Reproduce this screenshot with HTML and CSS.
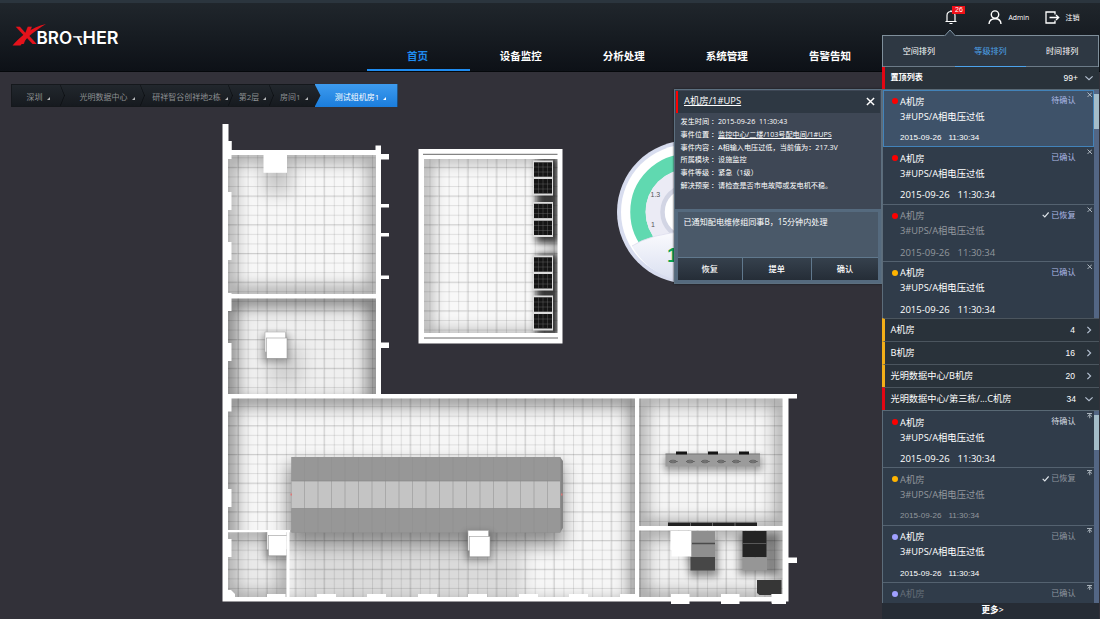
FILE: index.html
```html
<!DOCTYPE html>
<html>
<head>
<meta charset="utf-8">
<title>XBROTHER</title>
<link rel="stylesheet" href="styles.css">
</head>
<body>
<svg class="defs" width="0" height="0">
  <symbol id="x" viewBox="0 0 10 10"><path d="M1 1L9 9M9 1L1 9"/></symbol>
  <symbol id="pin" viewBox="0 0 10 10"><path d="M0 1H10M5 10V3M1 6.500L5 2.800L9 6.500"/></symbol>
  <symbol id="right" viewBox="0 0 10 10"><path d="M3 1L7 5L3 9"/></symbol>
  <symbol id="down" viewBox="0 0 10 10"><path d="M0.500 3L5 7L9.500 3"/></symbol>
  <symbol id="check" viewBox="0 0 10 10"><path d="M1 5.500L4 8.500L9.500 2"/></symbol>
</svg>
<header class="header">
  <svg class="logo" width="112" height="28" viewBox="10 21 112 28">
    <text class="logo-x" x="0" y="0" transform="translate(19 43.500) skewX(14) scale(1.050 1)">X</text>
    <path d="M12.500 45.500C20 37 31 27 46 24C36 30 27 37 20.500 45.500Z" fill="#e5121b"/>
    <text class="logo-t" x="36.500" y="43.500" textLength="35.500" lengthAdjust="spacingAndGlyphs">BRO</text>
    <text class="logo-t small" transform="translate(76.500 45) skewX(26) scale(1.250 1)" x="0" y="0">T</text>
    <text class="logo-t" x="82.500" y="43.500" textLength="36" lengthAdjust="spacingAndGlyphs">HER</text>
  </svg>
  <nav class="nav">
    <a class="nav-item on">首页</a><a class="nav-item">设备监控</a><a class="nav-item">分析处理</a><a class="nav-item">系统管理</a><a class="nav-item">告警告知</a>
  </nav>
  <div class="user">
    <div class="bell">
      <svg width="12" height="15" viewBox="0 0 12 15"><path d="M.5 11.500H11.500M2 11.500V5.500Q2 1.500 6 1.500T10 5.500V11.500M6 1.500V.3M4.500 13.500H7.500" fill="none" stroke="#fff" stroke-width="1.200"/></svg>
      <span class="badge">26</span>
    </div>
    <svg width="14" height="15" viewBox="0 0 14 15"><circle cx="7" cy="4.600" r="3.700" fill="none" stroke="#fff" stroke-width="1.400"/><path d="M1 14Q1.300 9 7 8.800T13 14" fill="none" stroke="#fff" stroke-width="1.400"/></svg>
    <span class="admin">Admin</span>
    <svg class="exit" width="15" height="13" viewBox="0 0 15 13"><path d="M10 3.500V1H1V12H10V9.500M4.500 6.500H13.500M11 4L13.700 6.500L11 9" fill="none" stroke="#fff" stroke-width="1.300"/></svg>
    <span class="logout">注销</span>
  </div>
</header>

<main class="stage">
  <svg class="plan" width="1100" height="547" viewBox="0 72 1100 547">
    <defs>
      <pattern id="tile" x="228.500" y="157.300" width="9.570" height="9.570" patternUnits="userSpaceOnUse"><path d="M0 .5H9.570M.5 0V9.570" stroke="#000" stroke-opacity=".11" stroke-width=".9"/></pattern>
      <pattern id="tile2" x="237" y="166.800" width="28.710" height="28.710" patternUnits="userSpaceOnUse"><path d="M0 .8H28.710M.8 0V28.710" stroke="#000" stroke-opacity=".07" stroke-width="1.500"/></pattern>
      <filter id="soft" x="-50%" y="-50%" width="200%" height="200%"><feGaussianBlur stdDeviation="8.500"/></filter>
      <filter id="soft4" x="-50%" y="-50%" width="200%" height="200%"><feGaussianBlur stdDeviation="3.500"/></filter>
      <clipPath id="c1"><rect x="228" y="155" width="148" height="139"/></clipPath>
      <clipPath id="c2"><rect x="228" y="298.500" width="148" height="95.500"/></clipPath>
      <clipPath id="c3"><rect x="228" y="398.500" width="407" height="198.500"/></clipPath>
      <clipPath id="c4"><rect x="639" y="398.500" width="143.500" height="127.500"/></clipPath>
      <clipPath id="c5"><rect x="639" y="530.500" width="143.500" height="66.500"/></clipPath>
      <clipPath id="c6"><rect x="228" y="532" width="58.500" height="65"/></clipPath>
      <clipPath id="c7"><rect x="424" y="159" width="133.500" height="174"/></clipPath>
      <linearGradient id="dial" x1="0" y1="0" x2="0" y2="1"><stop offset="0" stop-color="#fbfbfe"/><stop offset="1" stop-color="#d9dff0"/></linearGradient>
      <g id="box"><rect x="-3" y="2" width="27" height="28" fill="#000" opacity=".3" filter="url(#soft4)"/><rect width="20.500" height="20" fill="#fff" stroke="#aaa" stroke-width=".6"/><rect x="1.500" y="6" width="20.500" height="20.300" fill="#fff" stroke="#999" stroke-width=".6"/></g>
      <g id="rack"><rect width="20" height="35" fill="#ddd"/><rect x="1" y="1.800" width="18" height="14.500" fill="#151515"/><rect x="1" y="18.500" width="18" height="14.500" fill="#151515"/><path d="M5.500 1.800V33M10 1.800V33M14.500 1.800V33M1 6.500H19M1 11.500H19M1 23.500H19M1 28.500H19" stroke="#777" stroke-opacity=".5" stroke-width=".7"/><path d="M1 17.400H19" stroke="#ddd" stroke-width="2"/></g>
      <g id="unit"><ellipse cx="4" cy="2" rx="3.500" ry="1.300" fill="none" stroke="#555" stroke-width=".8"/><path d="M0 2H9" stroke="#555" stroke-width=".6"/></g>
    </defs>

    <!-- Walls -->
    <path fill="#fff" d="M222.500 124H228.500V141H231.500V150H375.500V145.500H381V394H797V398.500H788.500V557.500H797V563H788.500V601.500H786V604H772V601.500H739.500V604H721V601.500H689.500V604H671V601.500H222.500Z"/>
    <path fill="#fff" d="M381 154h8v5.500h-8zM381 204h8v3.500h-8zM381 233h8v3.500h-8zM381 275.500h8v3.500h-8zM381 342.500h8v5.500h-8z"/>

    <g clip-path="url(#c1)"><rect x="228" y="155" width="148" height="139" fill="#f7f7f7"/><path d="M228 155H376V294H228Z" fill="none" stroke="#000" stroke-opacity=".55" stroke-width="9" filter="url(#soft)"/><rect x="264" y="160" width="27" height="33" fill="#000" opacity=".2" filter="url(#soft)"/></g>
    <g clip-path="url(#c2)"><rect x="228" y="298" width="148" height="97" fill="#efefef"/><path d="M228 298H376V410H228Z" fill="none" stroke="#000" stroke-opacity=".68" stroke-width="12" filter="url(#soft)"/><rect x="270" y="345" width="32" height="40" fill="#000" opacity=".12" filter="url(#soft)"/></g>
    <g clip-path="url(#c3)"><rect x="228" y="398" width="408" height="200" fill="#f6f6f6"/><path d="M228 398H638V610H228Z" fill="none" stroke="#000" stroke-opacity=".65" stroke-width="11" filter="url(#soft)"/><rect x="288" y="465" width="275" height="80" fill="#000" opacity=".42" filter="url(#soft)"/><rect x="295" y="540" width="230" height="60" fill="#000" opacity=".11" filter="url(#soft)"/></g>
    <g clip-path="url(#c4)"><rect x="639" y="398" width="144" height="128" fill="#f5f5f5"/><path d="M639 398H783V528H639Z" fill="none" stroke="#000" stroke-opacity=".55" stroke-width="9" filter="url(#soft)"/><rect x="664" y="456" width="98" height="15" fill="#000" opacity=".35" filter="url(#soft4)"/></g>
    <g clip-path="url(#c5)"><rect x="639" y="530" width="144" height="68" fill="#f1f1f1"/><path d="M639 530H783V600H639Z" fill="none" stroke="#000" stroke-opacity=".55" stroke-width="9" filter="url(#soft)"/><path d="M684 540H718V577H690ZM739 534H778V575H739Z" fill="#000" opacity=".4" filter="url(#soft4)"/></g>
    <g clip-path="url(#c6)"><rect x="228" y="532" width="59" height="66" fill="#e9e9e9"/><path d="M228 532H287V600H228Z" fill="none" stroke="#000" stroke-opacity=".55" stroke-width="8" filter="url(#soft)"/></g>
    <path d="M228 155H375.500V294H228ZM228 298.500H375.500V394H228ZM228 398.500H635V597H228ZM639 398.500H782.500V526H639ZM639 530.500H782.500V597H639Z" fill="url(#tile)"/>
    <path d="M228 155H375.500V294H228ZM228 298.500H375.500V394H228ZM228 398.500H635V597H228ZM639 398.500H782.500V526H639ZM639 530.500H782.500V597H639Z" fill="url(#tile2)"/>

    <path fill="#fff" d="M228 141h3.500v18h-3.500zM228 192h3.500v18h-3.500zM228 242h3.500v18h-3.500zM228 293h3.500v18h-3.500zM228 343h3.500v18h-3.500zM228 394h3.500v17.500h-3.500zM228 489h3.500v18h-3.500zM228 539h3.500v18h-3.500zM228 590h3l4 4v3h-7zM228 530h62v2.300h-62zM286.500 530h3v67h-3zM267 594h18.500v3h-18.500zM317 594h19v3h-19zM367 594h19v3h-19zM418 594h19v3h-19zM468 594h19v3h-19zM519 594h19v3h-19zM569 594h19v3h-19zM620 594h17v3h-17z"/>
    <path fill="#fff" d="M671 594h18.500v4h-18.500zM721 594h18.500v4h-18.500z"/>

    <rect x="263.500" y="154" width="23.500" height="18.800" fill="#fff"/>
    <use href="#box" x="265" y="332"/>
    <g clip-path="url(#c6)"><use href="#box" x="267" y="529.500" /></g>

    <!-- Cabinet aisle -->
    <path d="M291.500 457H560L563 461V528L560 532.500H291.500Z" fill="#858585"/>
    <path d="M291.500 457H560.500V532.500H291.500Z" fill="#979797"/>
    <rect x="291.500" y="481" width="268.500" height="27.500" fill="#c4c4c4"/>
    <path d="M304.500 457v75.500M318 457v75.500M331.500 457v75.500M345 457v75.500M358.500 457v75.500M372 457v75.500M385.500 457v75.500M399 457v75.500M412.500 457v75.500M426 457v75.500M439.500 457v75.500M453 457v75.500M466.500 457v75.500M480 457v75.500M493.500 457v75.500M507 457v75.500M520.500 457v75.500M534 457v75.500M547.500 457v75.500" stroke="#777" stroke-opacity=".16" stroke-width=".8"/>
    <path d="M304.500 481v27.500M318 481v27.500M331.500 481v27.500M345 481v27.500M358.500 481v27.500M372 481v27.500M385.500 481v27.500M399 481v27.500M412.500 481v27.500M426 481v27.500M439.500 481v27.500M453 481v27.500M466.500 481v27.500M480 481v27.500M493.500 481v27.500M507 481v27.500M520.500 481v27.500M534 481v27.500M547.500 481v27.500" stroke="#777" stroke-opacity=".3" stroke-width=".8"/>
    <path d="M291.500 481H560M291.500 508.500H560" stroke="#858585" stroke-width=".6"/>
    <path d="M290.500 493.500h1.500v2h-1.500zM561 493.500h1.500v2h-1.500z" fill="#d77"/>
    <use href="#box" x="468" y="530.500"/>

    <!-- Battery and distribution rooms -->
    <rect x="665.500" y="454" width="94.500" height="12.500" fill="#9b9b9b"/>
    <path d="M665.500 454H760" stroke="#777"/>
    <path d="M676 451.500h11v3h-11zM708 451.500h10v3h-10zM739 451.500h10v3h-10z" fill="#151515"/>
    <use href="#unit" x="669" y="459.500"/><use href="#unit" x="686" y="459.500"/><use href="#unit" x="701" y="459.500"/><use href="#unit" x="717" y="459.500"/><use href="#unit" x="732" y="459.500"/><use href="#unit" x="749" y="459.500"/>
    <path d="M668 522.500h89v3.500h-89z" fill="#222"/><path d="M690.500 522.500v3.500M712.500 522.500v3.500M735 522.500v3.500" stroke="#888" stroke-width=".7"/>
    <path d="M670.500 531h21v25.500h-20v-6h-1z" fill="#fff"/>
    <path d="M691.500 531h23.500v26h-23.500z" fill="#8f8f8f"/><path d="M690.500 557h24.500v13.500h-24.500z" fill="#474747"/><path d="M692 543.500h23" stroke="#4b4b4b" stroke-width="1.500"/>
    <path d="M742.500 531h24v26h-24z" fill="#242424"/><path d="M742.500 557.500h24.500v13h-24.500z" fill="#969696"/><path d="M742.500 543.500h24" stroke="#666" stroke-width=".8"/>
    <path d="M757 580h24.500v14h-10v1h-12l-2.500-2z" fill="#363636"/><rect x="771.500" y="594" width="14.500" height="9.500" fill="#fff"/>

    <!-- UPS room -->
    <rect x="418.500" y="149" width="144" height="194.500" fill="#fff"/>
    <path d="M423 154.300H557.500M424 338H558" stroke="#666" stroke-width="1"/>
    <g clip-path="url(#c7)"><rect x="424" y="159" width="134" height="174" fill="#f8f8f8"/><path d="M424 155H560V338H424Z" fill="none" stroke="#000" stroke-opacity=".55" stroke-width="8" filter="url(#soft)"/><path d="M536 158H558V243H536ZM536 254H558V335H536Z" fill="#000" opacity=".75" filter="url(#soft4)"/></g>
    <path d="M424 159H557.500V333H424Z" fill="url(#tile)"/><path d="M424 159H557.500V333H424Z" fill="url(#tile2)"/>
    <use href="#rack" x="533" y="160.500"/><use href="#rack" x="533" y="202"/><use href="#rack" x="533" y="255.500"/><use href="#rack" x="533" y="295.500"/>

    <!-- Voltage dial -->
    <circle cx="688.500" cy="212" r="71.500" fill="#d8ddef"/><circle cx="688.500" cy="212" r="67.500" fill="#fff"/>
    <circle cx="688.500" cy="212" r="50.500" fill="none" stroke="#60d9b0" stroke-width="15.500"/>
    <circle cx="688.500" cy="212" r="43" fill="#ebebf5"/>
    <circle cx="688.500" cy="212" r="26" fill="#fff" stroke="#d2d5e4" stroke-width="4.500"/>
    <path d="M632 246Q650 234 688 231V282A70 70 0 0 1 632 246Z" fill="url(#dial)"/>
    <path d="M632 246Q650 234 688 231" fill="none" stroke="#dde" stroke-width=".8"/>
    <text class="scale" x="650.500" y="197">1.3</text><text class="scale" x="651" y="226.500">1</text>
    <text class="reading" x="667" y="262">1</text>
  </svg>

  <div class="crumbs">
    <a class="crumb w1">深圳<i></i></a><a class="crumb w2">光明数据中心<i></i></a><a class="crumb w3">研祥智谷创祥地2栋<i></i></a><a class="crumb w4">第2层<i></i></a><a class="crumb w5">房间1<i></i></a><a class="crumb on">测试组机房1<i></i></a>
  </div>
</main>

<section class="popup">
  <div class="pop-head"><span class="pop-title">A机房/1#UPS</span><svg class="pop-close"><use href="#x"/></svg></div>
  <dl class="facts">
    <dt>发生时间<s>：</s></dt><dd>2015-09-26&nbsp; 11:30:43</dd>
    <dt>事件位置<s>：</s></dt><dd><u>监控中心/二楼/103号配电间/1#UPS</u></dd>
    <dt>事件内容<s>：</s></dt><dd>A相输入电压过低，当前值为：217.3V</dd>
    <dt>所属模块<s>：</s></dt><dd>设施监控</dd>
    <dt>事件等级<s>：</s></dt><dd>紧急（1级）</dd>
    <dt>解决预案<s>：</s></dt><dd>请检查是否市电故障或发电机不稳。</dd>
  </dl>
  <div class="reply">
    <div class="note">已通知配电维修组同事B，15分钟内处理</div>
    <div class="buttons"><b>恢复</b><b>提单</b><b>确认</b></div>
  </div>
</section>

<aside class="panel">
  <svg class="notch" width="12" height="7" viewBox="0 0 12 7"><path d="M0 6.500H1.500L6 1L10.500 6.500H12V7H0Z" fill="#2e3945"/><path d="M1 6.500L6 1L11 6.500" fill="none" stroke="#8499a9"/></svg>
  <div class="tabs"><span>空间排列</span><span class="on">等级排列</span><span>时间排列</span></div>
  <div class="group red first"><span>置顶列表</span><em>99+</em><svg class="arrow"><use href="#down"/></svg></div>
  <div class="list top">
    <div class="items">
      <div class="item active"><i class="dot r"></i><div class="name">A机房</div><div class="desc">3#UPS/A相电压过低</div><div class="time sm"><span>2015-09-26</span><span>11:30:34</span></div><div class="state">待确认</div><svg class="act"><use href="#x"/></svg></div>
      <div class="item"><i class="dot r"></i><div class="name">A机房</div><div class="desc">3#UPS/A相电压过低</div><div class="time"><span>2015-09-26</span><span>11:30:34</span></div><div class="state">已确认</div><svg class="act"><use href="#x"/></svg></div>
      <div class="item dim"><i class="dot r"></i><div class="name">A机房</div><div class="desc">3#UPS/A相电压过低</div><div class="time"><span>2015-09-26</span><span>11:30:34</span></div><div class="state"><svg class="tick"><use href="#check"/></svg>已恢复</div><svg class="act"><use href="#x"/></svg></div>
      <div class="item"><i class="dot y"></i><div class="name">A机房</div><div class="desc">3#UPS/A相电压过低</div><div class="time"><span>2015-09-26</span><span>11:30:34</span></div><div class="state">已确认</div><svg class="act"><use href="#x"/></svg></div>
    </div>
    <div class="track"><div class="thumb"></div></div>
  </div>
  <div class="group"><span>A机房</span><em>4</em><svg class="arrow"><use href="#right"/></svg></div>
  <div class="group"><span>B机房</span><em>16</em><svg class="arrow"><use href="#right"/></svg></div>
  <div class="group"><span>光明数据中心/B机房</span><em>20</em><svg class="arrow"><use href="#right"/></svg></div>
  <div class="group red"><span>光明数据中心/第三栋/...C机房</span><em>34</em><svg class="arrow"><use href="#down"/></svg></div>
  <div class="list bottom">
    <div class="items">
      <div class="item"><i class="dot r"></i><div class="name">A机房</div><div class="desc">3#UPS/A相电压过低</div><div class="time"><span>2015-09-26</span><span>11:30:34</span></div><div class="state light">待确认</div><svg class="act"><use href="#pin"/></svg></div>
      <div class="item dim"><i class="dot y"></i><div class="name">A机房</div><div class="desc">3#UPS/A相电压过低</div><div class="time sm"><span>2015-09-26</span><span>11:30:34</span></div><div class="state grey"><svg class="tick"><use href="#check"/></svg>已恢复</div><svg class="act"><use href="#pin"/></svg></div>
      <div class="item"><i class="dot p"></i><div class="name">A机房</div><div class="desc">3#UPS/A相电压过低</div><div class="time sm"><span>2015-09-26</span><span>11:30:34</span></div><div class="state grey">已确认</div><svg class="act"><use href="#pin"/></svg></div>
      <div class="item faint"><i class="dot p"></i><div class="name">A机房</div><div class="state grey">已确认</div><svg class="act"><use href="#pin"/></svg></div>
    </div>
    <div class="track"><div class="thumb"></div></div>
  </div>
  <div class="more">更多&gt;</div>
</aside>
</body>
</html>
```
FILE: styles.css
```css
* { box-sizing: border-box; }
body {
  margin: 0; width: 1100px; height: 619px; overflow: hidden; position: relative;
  background: #323139; color: #fff;
  font-family: "Open Sans", "Noto Sans CJK SC", sans-serif; font-size: 9px;
}
.defs { position: absolute; }
svg { flex: none; }

.header {
  height: 72px; display: flex; border-top: 3px solid #2b353e; border-bottom: 1px solid #05080b;
  background: linear-gradient(#20262c, #0d1117);
}
.logo { margin: 18px 0 0 10px; }
.logo-x { font: bold 25px "Liberation Sans", sans-serif; fill: #e5121b; }
.logo-t { font: 600 17.500px Inter, sans-serif; fill: #fff; }
.logo-t.small { font-size: 12px; }
.nav { display: flex; margin-left: 244.500px; align-items: flex-end; }
.nav-item {
  width: 103.100px; height: 29px; line-height: 29px; text-align: center; padding-right: 1px;
  font-size: 10.500px; font-weight: bold; border-bottom: 2.500px solid transparent;
}
.nav-item.on { color: #1f8cf0; border-color: #1f8cf0; }
.user { display: flex; align-items: center; height: 28px; margin-left: 63.500px; }
.bell { width: 43px; height: 15px; position: relative; }
.badge {
  position: absolute; left: 7px; top: -4px; width: 13px; height: 8px;
  background: #f01018; font: 7px/8px "Liberation Sans", sans-serif; text-align: center;
}
.admin { margin-left: 6px; width: 37px; font-size: 6.800px; }
.logout { margin-left: 5px; font-size: 7px; }

.stage { height: 547px; position: relative; }
.plan { display: block; }
.crumbs {
  position: absolute; left: 11px; top: 12px; width: 387px; height: 23px; display: flex;
  background: linear-gradient(#22272d, #161a1f); border: 1px solid #15181c;
}
.crumb {
  position: relative; height: 21px; line-height: 23px; text-align: center; color: #8d9093;
  font-size: 8px;
}
.crumb i { display: inline-block; margin-left: 4px; border-left: 3px solid transparent; border-bottom: 3px solid #b6b8ba; }
.crumb:not(.on)::before {
  content: ""; position: absolute; right: -4px; top: 3px; width: 14px; height: 14px;
  border: solid #090c0f; border-width: 1px 1px 0 0; transform: scaleX(.4) rotate(45deg);
}
.w1 { width: 52px; } .w2 { width: 80px; padding-left: 6px; } .w3 { width: 88px; padding-left: 4px; }
.w4 { width: 41px; } .w5 { width: 38.500px; padding-left: 3px; }
.crumb:nth-child(5)::before { display: none; }
.crumb.on {
  width: 83px; margin: -1px -1px -1px 3px; height: 23px; line-height: 25px; color: #fff; padding-left: 9px;
  background: linear-gradient(#3d9bef, #1b7ddc);
  clip-path: polygon(0 0, 100% 0, 100% 100%, 0 100%, 6px 50%);
}
.crumb.on i { border-bottom-color: #fff; }

.scale { font: 7px "Liberation Sans", sans-serif; fill: #555; }
.reading { font: bold 21px "Liberation Sans", sans-serif; fill: #0ba653; }

.popup {
  position: absolute; left: 674px; top: 89px; width: 208px; height: 195px; padding: 1px;
  border: 1px solid #5c6f7f; background: #3e4755; display: flex; flex-direction: column;
  box-shadow: 0 0 2px #15181c;
}
.pop-head {
  height: 21.500px; background: #2e3843; border-left: 2px solid #f00; display: flex;
  align-items: center; justify-content: space-between; padding: 0 5px 0 6px;
}
.pop-title { font-size: 9.400px; line-height: 18px; margin-top: -2px; text-decoration: underline; }
.pop-close { width: 9px; height: 9px; stroke: #fff; stroke-width: 1.600; }
.facts {
  margin: 2.700px 0 0 4.500px; height: 94.300px; display: grid; grid-template-columns: 37.500px 1fr;
  grid-auto-rows: 12.700px; font-size: 7.150px; line-height: 12.700px; white-space: nowrap;
}
.facts dt, .facts dd { margin: 0; }
.facts s { text-decoration: none; padding-left: 2px; }
.reply { flex: 1; border: 3px solid #556a7e; background: #60788d; margin: 0 -1px -1px; display: flex; flex-direction: column; gap: 1px; }
.note { flex: 1; background: #4a5969; font-size: 8.100px; padding: 3.500px 5.500px; }
.buttons { height: 22.500px; display: flex; gap: 1px; }
.buttons b {
  width: 68.500px; background: linear-gradient(#36414d, #252d37); text-align: center; line-height: 21px;
  font-weight: 500; font-size: 8.200px;
}
.buttons b:first-child { width: 63.500px; }
.buttons b:last-child { flex: 1; }

.panel { position: absolute; left: 882px; top: 35px; width: 217px; height: 584px; background: #2d3641; }
.notch { position: absolute; left: 62px; top: -6px; z-index: 1; }
.tabs { height: 31.500px; display: flex; border: 1px solid #7f8f9b; border-bottom: 0; background: #2e3843; }
.tabs span { flex: 1; text-align: center; line-height: 30px; font-size: 8.100px; border-bottom: 1.500px solid #6c7b88; }
.tabs .on { color: #4da3ec; border-color: #4da3ec; }
.group {
  height: 23px; display: flex; align-items: center; background: #29323a; padding: 0 6px 0 5.500px;
  border-left: 3px solid #f2ae18; border-top: 1px solid #4b555e; font-size: 9.200px; line-height: 18px; white-space: nowrap;
}
.group.red { border-left-color: #e30613; }
.group span { flex: 1; margin-top: -1px; }
.group.first { font-weight: bold; font-size: 8.100px; height: 22.500px; border-top: 0; }
.group em { font: 8.500px "Liberation Sans", sans-serif; margin-right: 10px; }
.group.first em, .group.red em { margin-right: 7px; }
.group.red:not(.first) em { margin-right: 9px; }
.arrow { width: 8px; height: 8px; fill: none; stroke: #b5c1d2; stroke-width: 1.500; }
.list { display: flex; overflow: hidden; border-left: 1px solid #5c6c7a; border-top: 1px solid #596975; }
.list.top { height: 229px; }
.list.bottom { height: 192.500px; }
.items { flex: 1; }
.track { width: 5px; background: #536684; padding-top: 4px; }
.thumb { height: 35px; background: #a4bdc9; }
.item {
  position: relative; height: 57.300px; padding: 3.500px 0 0 17px; background: #303c4a;
  border-bottom: 1px solid #546270; white-space: nowrap;
}
.item.active { background: #3e5269; border: 1px solid #4283ba; padding: 2.500px 0 0 16px; }
.dot { position: absolute; left: 9px; top: 8px; width: 6px; height: 6px; border-radius: 50%; }
.active .dot { left: 8px; top: 7px; }
.r { background: #fd0000; } .y { background: #ffb400; } .p { background: #a0a0ff; }
.name { font-size: 9.300px; line-height: 15px; }
.desc { font-size: 9.300px; line-height: 15px; }
.time { font-size: 9.500px; line-height: 15px; margin-top: 6.500px; display: flex; gap: 8px; }
.time.sm { font: 8.100px/15px "Liberation Sans", sans-serif; gap: 7px; }
.dim { color: #92979d; }
.faint { color: #656e78; }
.state { position: absolute; right: 18.500px; top: 3px; font-size: 8.100px; line-height: 14px; color: #adb9e6; display: flex; align-items: center; gap: 2px; }
.active .state { right: 17.500px; top: 2px; }
.state.light { color: #d8dce2; }
.state.grey { color: #8f969f; }
.act { position: absolute; right: 2px; top: 2px; width: 5.500px; height: 5.500px; fill: none; stroke: #c2cbd3; stroke-width: 1.600; }
.active .act { right: 1px; top: 1px; }
.tick { width: 7px; height: 7px; fill: none; stroke: #dfe5ea; stroke-width: 1.700; }
.more { height: 17px; line-height: 15px; text-align: center; font-size: 8.600px; font-weight: 600; background: #262c35; padding-left: 4px; }
```
